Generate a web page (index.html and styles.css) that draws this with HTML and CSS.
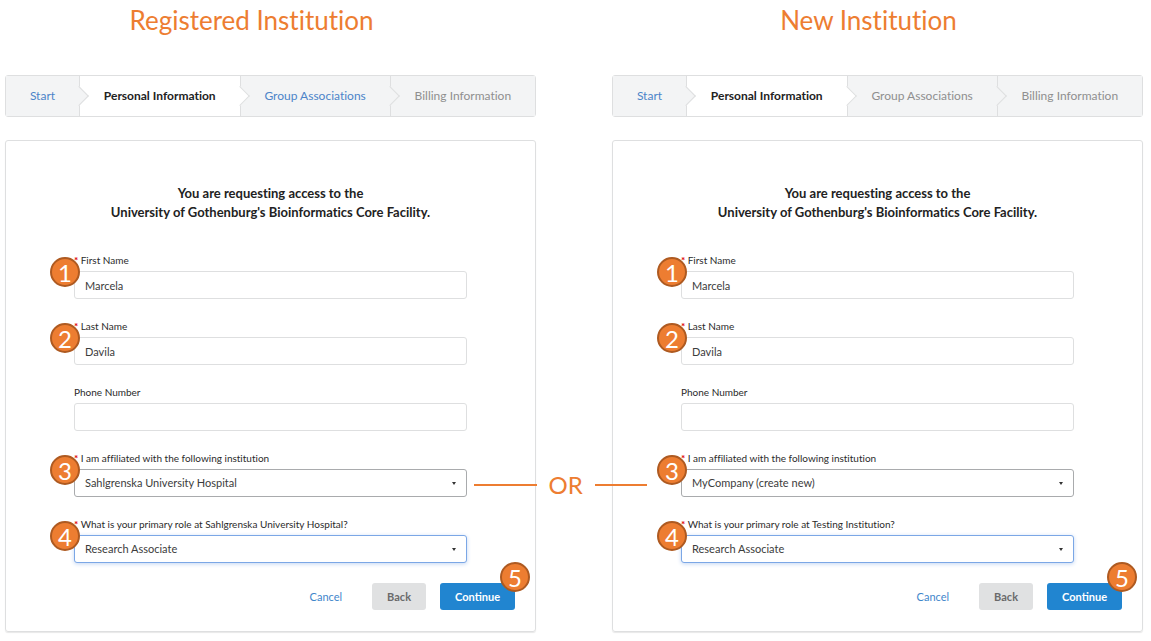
FILE: index.html
```html
<!DOCTYPE html>
<html lang="en">
<head>
<meta charset="utf-8">
<title>Request access</title>
<link rel="stylesheet" href="styles.css">
</head>
<body>
<main class="compare">
  <section class="flow">
    <h1 class="flow-title">Registered Institution</h1>
    <nav class="steps" aria-label="Progress">
      <a class="step" href="#">Start</a>
      <span class="step step-active" aria-current="step">Personal Information</span>
      <a class="step" href="#">Group Associations</a>
      <span class="step step-disabled">Billing Information</span>
    </nav>
    <form class="card">
      <h2 class="card-title">You are requesting access to the<br>University of Gothenburg's Bioinformatics Core Facility.</h2>
      <div class="fields">
        <div class="field">
          <label class="label required" for="first-a">First Name</label>
          <input class="control" id="first-a" type="text" value="Marcela">
          <span class="badge">1</span>
        </div>
        <div class="field">
          <label class="label required" for="last-a">Last Name</label>
          <input class="control" id="last-a" type="text" value="Davila">
          <span class="badge">2</span>
        </div>
        <div class="field">
          <label class="label" for="phone-a">Phone Number</label>
          <input class="control" id="phone-a" type="tel">
        </div>
        <div class="field">
          <label class="label required" for="inst-a">I am affiliated with the following institution</label>
          <div class="select">
            <select class="control control-dark" id="inst-a"><option>Sahlgrenska University Hospital</option></select>
          </div>
          <span class="badge">3</span>
          <div class="connector"><span class="connector-text">OR</span></div>
        </div>
        <div class="field">
          <label class="label required" for="role-a">What is your primary role at Sahlgrenska University Hospital?</label>
          <div class="select">
            <select class="control control-focus" id="role-a"><option>Research Associate</option></select>
          </div>
          <span class="badge">4</span>
        </div>
      </div>
      <div class="actions">
        <a class="cancel" href="#">Cancel</a>
        <button class="button" type="button">Back</button>
        <div class="primary-wrap">
          <button class="button button-primary" type="button">Continue</button>
          <span class="badge badge-corner">5</span>
        </div>
      </div>
    </form>
  </section>

  <section class="flow">
    <h1 class="flow-title">New Institution</h1>
    <nav class="steps" aria-label="Progress">
      <a class="step" href="#">Start</a>
      <span class="step step-active" aria-current="step">Personal Information</span>
      <span class="step step-disabled">Group Associations</span>
      <span class="step step-disabled">Billing Information</span>
    </nav>
    <form class="card">
      <h2 class="card-title">You are requesting access to the<br>University of Gothenburg's Bioinformatics Core Facility.</h2>
      <div class="fields">
        <div class="field">
          <label class="label required" for="first-b">First Name</label>
          <input class="control" id="first-b" type="text" value="Marcela">
          <span class="badge">1</span>
        </div>
        <div class="field">
          <label class="label required" for="last-b">Last Name</label>
          <input class="control" id="last-b" type="text" value="Davila">
          <span class="badge">2</span>
        </div>
        <div class="field">
          <label class="label" for="phone-b">Phone Number</label>
          <input class="control" id="phone-b" type="tel">
        </div>
        <div class="field">
          <label class="label required" for="inst-b">I am affiliated with the following institution</label>
          <div class="select">
            <select class="control control-dark" id="inst-b"><option>MyCompany (create new)</option></select>
          </div>
          <span class="badge">3</span>
        </div>
        <div class="field">
          <label class="label required" for="role-b">What is your primary role at Testing Institution?</label>
          <div class="select">
            <select class="control control-focus" id="role-b"><option>Research Associate</option></select>
          </div>
          <span class="badge">4</span>
        </div>
      </div>
      <div class="actions">
        <a class="cancel" href="#">Cancel</a>
        <button class="button" type="button">Back</button>
        <div class="primary-wrap">
          <button class="button button-primary" type="button">Continue</button>
          <span class="badge badge-corner">5</span>
        </div>
      </div>
    </form>
  </section>
</main>
</body>
</html>
```

FILE: styles.css
```css
* {
  box-sizing: border-box;
}

body {
  margin: 0;
  background: #fff;
  color: #2b2b2b;
  font-family: Lato, "Liberation Sans", sans-serif;
  font-size: 11px;
  font-variant-ligatures: none;
}

.compare {
  display: grid;
  grid-template-columns: 1fr 1fr;
  gap: 76px;
  padding: 5px 8px 10px 5px;
}

.flow-title {
  margin: 0 0 40px;
  padding-right: 38px;
  color: #ed7d31;
  font-size: 26px;
  font-weight: 400;
  line-height: 30px;
  text-align: center;
}

.flow + .flow .flow-title {
  padding-right: 18px;
}

.steps {
  display: flex;
  height: 42px;
  margin-bottom: 23px;
  border: 1px solid #dedfe0;
  border-radius: 3px;
}

.step {
  position: relative;
  display: flex;
  flex: 1 1 auto;
  align-items: center;
  justify-content: center;
  padding: 0 20px 2px;
  border-right: 1px solid #dedfe0;
  background: #f3f4f5;
  color: #4c84c9;
  font-size: 12px;
  text-decoration: none;
  white-space: nowrap;
}

.step:last-child {
  border-right: 0;
}

.step:not(:last-child)::after {
  content: "";
  position: absolute;
  z-index: 1;
  top: 50%;
  right: -7px;
  width: 13px;
  height: 13px;
  border: solid #dedfe0;
  border-width: 1px 1px 0 0;
  background: inherit;
  transform: translateY(-50%) rotate(45deg);
}

.step-active {
  background: #fff;
  color: #222;
  font-weight: 700;
}

.step-disabled {
  color: #8f8f8f;
}

.card {
  padding: 43px 20px 21px;
  border: 1px solid #dedfe0;
  border-radius: 3px;
  box-shadow: 0 1px 1px #e8e8e8;
}

.card-title {
  margin: 0 0 31px;
  color: #222;
  font-size: 13px;
  font-weight: 700;
  line-height: 19px;
  text-align: center;
}

.fields {
  display: grid;
  gap: 20px;
  padding: 0 48px;
}

.field {
  position: relative;
}

.label {
  display: block;
  margin-bottom: 4px;
  font-size: 10px;
  line-height: 14px;
}

.required::before {
  content: "* ";
  color: #e00000;
  font-weight: 700;
}

.control {
  display: block;
  width: 100%;
  height: 28px;
  padding: 0 10px;
  border: 1px solid #dedfe0;
  border-radius: 3px;
  outline: 0;
  appearance: none;
  background: #fff;
  color: #3c3c3c;
  font: inherit;
  font-variant-ligatures: none;
}

.control-dark,
.control-focus {
  padding-bottom: 2px;
}

.control-dark {
  border-color: #a9abad;
}

.control-focus {
  border-color: #7ba7e6;
  box-shadow: 0 1px 4px #c3d6f3;
}

.select {
  position: relative;
}

.select::after {
  content: "";
  position: absolute;
  top: 13px;
  right: 11px;
  border: solid transparent;
  border-width: 3px 2px 0;
  border-top-color: #333;
}

.badge {
  position: absolute;
  z-index: 2;
  top: 4px;
  left: -24px;
  width: 30px;
  height: 30px;
  border: 2px solid #ae5a21;
  border-radius: 50%;
  background: #ed7d31;
  color: #fff;
  font-size: 24px;
  line-height: 28px;
  text-align: center;
}

.connector {
  position: absolute;
  z-index: 2;
  top: 19px;
  left: calc(100% + 7px);
  display: flex;
  align-items: center;
  width: 173px;
  color: #ed7d31;
}

.connector::before,
.connector::after {
  content: "";
  height: 2px;
  background: #ed7d31;
}

.connector::before {
  flex: 6;
}

.connector::after {
  flex: 5;
}

.connector-text {
  padding: 0 12px;
  font-size: 24px;
  line-height: 30px;
}

.actions {
  display: flex;
  align-items: center;
  justify-content: flex-end;
  gap: 14px;
  margin-top: 20px;
}

.cancel {
  margin-right: 16px;
  color: #3f86cb;
  font-size: 11px;
  text-decoration: none;
}

.button {
  display: block;
  height: 27px;
  padding: 0 15px;
  border: 0;
  border-radius: 3px;
  background: #e0e1e2;
  color: #6a6a6a;
  font: 700 11px Lato, "Liberation Sans", sans-serif;
}

.button-primary {
  background: #2185d0;
  color: #fff;
}

.primary-wrap {
  position: relative;
}

.badge-corner {
  top: -21px;
  right: -15px;
  left: auto;
}
```
